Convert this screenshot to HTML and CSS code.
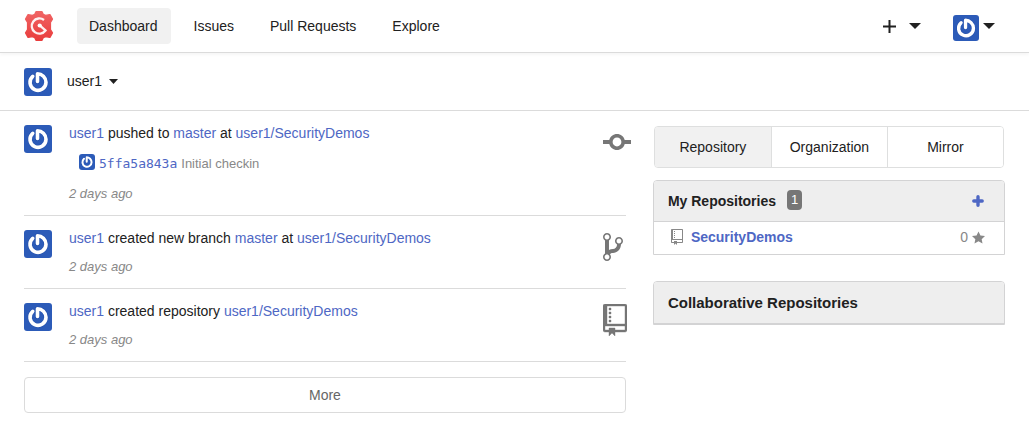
FILE: index.html
```html
<!DOCTYPE html>
<html lang="en">
<head>
<meta charset="utf-8">
<meta name="viewport" content="width=device-width, initial-scale=1">
<title>user1 - Dashboard</title>
<link rel="stylesheet" href="styles.css">
</head>
<body>
<svg class="symbols" aria-hidden="true">
  <symbol id="avatar" viewBox="0 0 28 28">
    <rect width="28" height="28" fill="#2c5bb8"/>
    <path d="M13.300 13.500V5.700C18 5.700 22 9.500 22 14.300A8 8 0 1 1 8.700 8.300" fill="none" stroke="#1d469b" stroke-width="4.600" stroke-linecap="round" stroke-linejoin="round" opacity=".35"/>
    <path d="M13.500 13.500V5.700C18 5.700 22 9.500 22 14.300A8 8 0 1 1 8.700 8.300" fill="none" stroke="#fff" stroke-width="3.600" stroke-linecap="round" stroke-linejoin="round"/>
  </symbol>
  <symbol id="repo" viewBox="0 0 12 16">
    <path d="M4 9H3V8h1v1zm0-3H3v1h1V6zm0-2H3v1h1V4zm0-2H3v1h1V2zm8-1v12c0 .55-.45 1-1 1H6v2l-1.500-1.500L3 16v-2H1c-.55 0-1-.45-1-1V1c0-.55.45-1 1-1h10c.55 0 1 .45 1 1zm-1 10H1v2h2v-1h3v1h5v-2zm0-10H2v9h9V1z"/>
  </symbol>
  <symbol id="caret" viewBox="0 0 12 6"><path d="M0 0h12L6 6z"/></symbol>
</svg>

<header class="topbar">
  <a class="logo" href="#" aria-label="Home">
    <svg width="30" height="32" viewBox="0 0 30 32">
      <defs><linearGradient id="red" x1="0" y1="0" x2="0" y2="1"><stop offset="0" stop-color="#f06464"/><stop offset="1" stop-color="#e93c3c"/></linearGradient></defs>
      <path fill="url(#red)" stroke="url(#red)" stroke-width="1.400" stroke-linejoin="round" d="M12 1.800h6l1.200 2.500 2.300 1.100 4.400-.8 2.500 4.500-2 3.400v7l2 3.400-2.500 4.500-4.400-.8-2.300 1.100-1.200 2.500h-6l-1.200-2.500-2.300-1.100-4.400.8-2.500-4.500 2-3.400v-7l-2-3.400 2.500-4.500 4.400.8 2.300-1.100z"/>
      <path d="M20 10A7.600 7.600 0 1 0 21.500 20.500L16 15.700" fill="none" stroke="#fff" stroke-opacity=".92" stroke-width="2.300"/>
      <circle cx="15.700" cy="15.500" r="2.100" fill="#fff"/>
    </svg>
  </a>
  <nav class="nav" aria-label="Main">
    <a class="nav-link active" href="#" aria-current="page">Dashboard</a>
    <a class="nav-link" href="#">Issues</a>
    <a class="nav-link" href="#">Pull Requests</a>
    <a class="nav-link" href="#">Explore</a>
  </nav>
  <div class="actions">
    <button class="menu-button create" type="button" aria-label="Create" aria-haspopup="menu">
      <svg width="13" height="13" viewBox="0 0 13 13"><path d="M0 5.500h5.500V0h2v5.500H13v2H7.500V13h-2V7.500H0z"/></svg>
      <svg class="caret" width="12" height="6"><use href="#caret"/></svg>
    </button>
    <button class="menu-button account" type="button" aria-label="Account" aria-haspopup="menu">
      <svg class="avatar" width="26" height="26"><use href="#avatar"/></svg>
      <svg class="caret" width="12" height="6"><use href="#caret"/></svg>
    </button>
  </div>
</header>

<div class="context">
  <button class="menu-button switcher" type="button" aria-haspopup="menu">
    <svg class="avatar" width="28" height="28"><use href="#avatar"/></svg>
    <span class="switcher-label">user1
      <svg width="9" height="5" viewBox="0 0 12 6" preserveAspectRatio="none"><path d="M0 0h12L6 6z"/></svg>
    </span>
  </button>
</div>

<main class="content">
  <section class="feed" aria-label="Activity">
    <article class="event">
      <svg class="avatar" width="28" height="28"><use href="#avatar"/></svg>
      <div class="event-body">
        <p><a href="#">user1</a> pushed to <a href="#">master</a> at <a href="#">user1/SecurityDemos</a></p>
        <div class="commit">
          <svg class="avatar" width="16" height="16"><use href="#avatar"/></svg>
          <a class="hash" href="#">5ffa5a843a</a>
          <span>Initial checkin</span>
        </div>
        <time>2 days ago</time>
      </div>
      <div class="event-icon">
        <svg width="28" height="32" viewBox="0 0 14 16"><path d="M10.860 7c-.45-1.720-2-3-3.860-3-1.860 0-3.410 1.280-3.860 3H0v2h3.140c.45 1.720 2 3 3.860 3 1.860 0 3.410-1.280 3.860-3H14V7h-3.140zM7 10.200c-1.220 0-2.200-.98-2.200-2.200 0-1.220.98-2.200 2.200-2.200 1.220 0 2.200.98 2.200 2.200 0 1.220-.98 2.200-2.200 2.200z"/></svg>
      </div>
    </article>
    <article class="event">
      <svg class="avatar" width="28" height="28"><use href="#avatar"/></svg>
      <div class="event-body">
        <p><a href="#">user1</a> created new branch <a href="#">master</a> at <a href="#">user1/SecurityDemos</a></p>
        <time>2 days ago</time>
      </div>
      <div class="event-icon">
        <svg width="20" height="32" viewBox="0 0 10 16"><path d="M10 5c0-1.110-.89-2-2-2a1.993 1.993 0 0 0-1 3.720v.3c-.02.52-.23.98-.63 1.380-.4.4-.86.61-1.380.63-.83.02-1.480.16-2 .45V4.720a1.993 1.993 0 0 0-1-3.720C.88 1 0 1.890 0 3a2 2 0 0 0 1 1.720v6.560c-.59.35-1 .99-1 1.720 0 1.110.89 2 2 2 1.110 0 2-.89 2-2 0-.53-.2-1-.53-1.360.09-.06.48-.41.59-.47.25-.11.56-.17.94-.17 1.050-.05 1.950-.45 2.750-1.250S8.950 7.770 9 6.730h-.02C9.590 6.370 10 5.730 10 5zM2 1.800c.66 0 1.200.55 1.200 1.200 0 .65-.55 1.200-1.200 1.200C1.350 4.200.8 3.650.8 3c0-.65.55-1.200 1.200-1.200zm0 12.410c-.66 0-1.200-.55-1.200-1.200 0-.65.55-1.200 1.200-1.200.65 0 1.200.55 1.200 1.200 0 .65-.55 1.200-1.200 1.200zm6-8c-.66 0-1.200-.55-1.200-1.200 0-.65.55-1.200 1.200-1.200.65 0 1.200.55 1.200 1.200 0 .65-.55 1.200-1.200 1.200z"/></svg>
      </div>
    </article>
    <article class="event">
      <svg class="avatar" width="28" height="28"><use href="#avatar"/></svg>
      <div class="event-body">
        <p><a href="#">user1</a> created repository <a href="#">user1/SecurityDemos</a></p>
        <time>2 days ago</time>
      </div>
      <div class="event-icon">
        <svg class="repo-large" width="24" height="32"><use href="#repo"/></svg>
      </div>
    </article>
    <button class="more" type="button">More</button>
  </section>

  <aside class="sidebar">
    <div class="tabs" role="tablist">
      <button class="tab active" type="button" role="tab" aria-selected="true">Repository</button>
      <button class="tab" type="button" role="tab" aria-selected="false">Organization</button>
      <button class="tab" type="button" role="tab" aria-selected="false">Mirror</button>
    </div>
    <section class="panel">
      <div class="panel-head">
        <h2>My Repositories</h2>
        <span class="count">1</span>
        <a class="add" href="#" aria-label="New repository">
          <svg width="12" height="12" viewBox="0 0 12 12"><path d="M6 1.800v8.400M1.800 6h8.400" fill="none" stroke="currentColor" stroke-width="3.400" stroke-linecap="round"/></svg>
        </a>
      </div>
      <ul class="repos">
        <li class="repo">
          <svg width="12" height="16"><use href="#repo"/></svg>
          <a href="#">SecurityDemos</a>
          <span class="stars">0 <svg width="13" height="13" viewBox="0 1 14 13"><path d="M14 6l-4.900-.64L7 1 4.900 5.360 0 6l3.600 3.260L2.670 14 7 11.670 11.330 14l-.93-4.740L14 6z"/></svg></span>
        </li>
      </ul>
    </section>
    <section class="panel collaborative">
      <div class="panel-head"><h2>Collaborative Repositories</h2></div>
    </section>
  </aside>
</main>
</body>
</html>
```
FILE: styles.css
```css
* {
  box-sizing: border-box;
}

body {
  margin: 0;
  background: #fff;
  color: #212121;
  font: 14px/16px "Liberation Sans", Arial, sans-serif;
}

a {
  color: #4e67c4;
  text-decoration: none;
}

button {
  font: inherit;
  color: inherit;
  cursor: pointer;
}

p, h2, ul {
  margin: 0;
  padding: 0;
}

svg {
  display: block;
  flex: none;
  fill: currentColor;
}

.symbols {
  position: absolute;
  width: 0;
  height: 0;
}

.avatar {
  border-radius: 3px;
}

.topbar {
  display: flex;
  align-items: center;
  height: 53px;
  padding: 0 34px 0 24px;
  border-bottom: 1px solid #dbdbdb;
  box-shadow: 0 2px 3px rgba(0, 0, 0, 0.04);
}

.nav {
  display: flex;
  margin-left: 23px;
  gap: 10px;
}

.nav-link {
  padding: 10px 13px 10px 12px;
  border-radius: 4px;
  color: #212121;
}

.nav-link + .nav-link {
  padding-left: 13px;
}

.nav-link.active {
  background: #f1f1f1;
}

.actions {
  display: flex;
  align-items: center;
  gap: 32px;
  margin-left: auto;
}

.menu-button {
  display: flex;
  align-items: center;
  padding: 0;
  border: 0;
  background: none;
}

.create {
  gap: 13px;
}

.account {
  gap: 4px;
  padding-top: 4px;
}

.account .caret {
  margin-bottom: 4px;
}

.context {
  padding: 15px 24px 14px;
  border-bottom: 1px solid #dbdbdb;
}

.switcher {
  gap: 15px;
}

.switcher-label {
  display: flex;
  align-items: center;
  gap: 7px;
  padding-bottom: 2px;
}

.content {
  display: grid;
  grid-template-columns: 12fr 7fr;
  gap: 28px;
  padding: 0 24px 18px;
}

.event {
  display: grid;
  grid-template-columns: 28px 1fr 23px;
  column-gap: 17px;
  padding: 14px 0 13px;
  border-bottom: 1px solid #dbdbdb;
}

.event-body {
  display: flex;
  flex-direction: column;
  gap: 13px;
}

.commit {
  display: flex;
  gap: 4px;
  padding-left: 10px;
  color: #888;
  font-size: 13px;
  line-height: 19px;
}

.hash {
  font-family: "DejaVu Sans Mono", monospace;
}

time {
  color: #888;
  font-size: 13px;
  font-style: italic;
}

.event-icon {
  height: 31px;
  padding-top: 1px;
  color: #767676;
}

.repo-large {
  stroke: currentColor;
  stroke-width: 0.2px;
}

.more {
  width: 100%;
  margin-top: 15px;
  padding: 9px;
  border: 1px solid #dbdbdb;
  border-radius: 4px;
  background: #fff;
  color: #666;
}

.sidebar {
  padding-top: 15px;
}

.tabs {
  display: grid;
  grid-template-columns: repeat(3, 1fr);
  margin: 0 1px 12px;
  border: 1px solid #dedfdf;
  border-radius: 4px;
  overflow: hidden;
}

.tab {
  padding: 12px 0;
  border: 0;
  border-left: 1px solid #dedfdf;
  background: #fff;
}

.tab:first-child {
  border-left: 0;
}

.tab.active {
  background: #f1f1f1;
}

.panel {
  border: 1px solid #d3d3d4;
  border-radius: 4px 4px 0 0;
  overflow: hidden;
}

.sidebar {
  margin-left: -1px;
}

.panel-head {
  display: flex;
  align-items: center;
  height: 41px;
  padding: 0 20px 0 14px;
  border-bottom: 1px solid #d3d3d4;
  background: #eee;
}

.panel-head h2 {
  font-size: 14px;
}

.count {
  margin: 0 0 2px 11px;
  padding: 2px 4px;
  border-radius: 4px;
  background: #767676;
  color: #fff;
  font-size: 13px;
}

.add {
  margin-left: auto;
}

.repos {
  list-style: none;
}

.repo {
  display: flex;
  align-items: center;
  padding: 7px 19px 9px 17px;
  color: #888;
}

.repo a {
  margin-left: 8px;
  font-weight: bold;
}

.stars {
  display: flex;
  align-items: center;
  gap: 4px;
  margin-left: auto;
}

.collaborative {
  margin-top: 26px;
}

.collaborative .panel-head {
  height: 42px;
}

.panel.collaborative h2 {
  font-size: 15px;
}
```
